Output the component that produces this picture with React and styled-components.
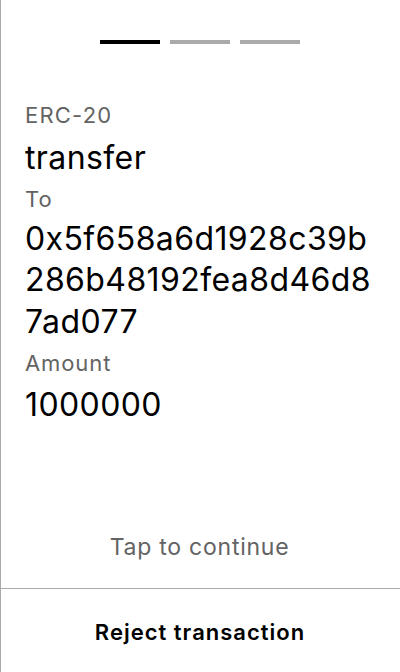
import React from "react";
import styled, { createGlobalStyle } from "styled-components";

const GlobalStyle = createGlobalStyle`
  html, body { margin: 0; padding: 0; background: #fff; }
  body { font-family: Inter, "Noto Sans", sans-serif; -webkit-font-smoothing: antialiased; }
  * { box-sizing: border-box; }
`;

const Screen = styled.div`
  width: 400px;
  height: 672px;
  border-left: 1px solid #aaaaaa;
  display: flex;
  flex-direction: column;
  background: #fff;
  color: #000;
`;

const Steps = styled.div`
  display: flex;
  justify-content: center;
  gap: 10px;
  padding: 40px 1px 0 0;
`;

const Step = styled.div`
  width: 60px;
  height: 4px;
  background: ${(p) => (p.$active ? "#000" : "#aaaaaa")};
`;

const Body = styled.div`
  flex: 1;
  display: flex;
  flex-direction: column;
  padding: 57px 16px 0 24px;
`;

const Label = styled.div`
  font-size: 22px;
  line-height: 28px;
  letter-spacing: ${(p) => p.$ls ?? 0.9}px;
  color: #636363;
  margin-top: ${(p) => p.$mt || 0}px;
`;

const Value = styled.div`
  font-size: 32px;
  line-height: 41.5px;
  letter-spacing: 0.4px;
  word-break: break-all;
  margin-top: ${(p) => p.$mt || 0}px;
`;

const Hint = styled.div`
  margin: auto -16px 0 -24px;
  text-align: center;
  font-size: 23px;
  line-height: 28px;
  letter-spacing: 0.75px;
  color: #636363;
  padding: 0 2px 27px 0;
`;

const Footer = styled.button`
  all: unset;
  box-sizing: border-box;
  display: flex;
  align-items: center;
  justify-content: center;
  height: 84px;
  border-top: 1px solid #aaaaaa;
  font-family: Inter, "Noto Sans", sans-serif;
  font-size: 22px;
  font-weight: 600;
  line-height: 28px;
  letter-spacing: 1px;
  color: #000;
  padding: 2px 1px 0 0;
  cursor: pointer;
`;

export default function App() {
  return (
    <>
      <GlobalStyle />
      <Screen>
        <Steps>
          <Step $active />
          <Step />
          <Step />
        </Steps>
        <Body>
          <Label $ls={1.2}>ERC-20</Label>
          <Value $mt={8}>transfer</Value>
          <Label $mt={6}>To</Label>
          <Value $mt={5}>0x5f658a6d1928c39b286b48192fea8d46d87ad077</Value>
          <Label $mt={7}>Amount</Label>
          <Value $mt={7}>1000000</Value>
          <Hint>Tap to continue</Hint>
        </Body>
        <Footer>Reject transaction</Footer>
      </Screen>
    </>
  );
}
